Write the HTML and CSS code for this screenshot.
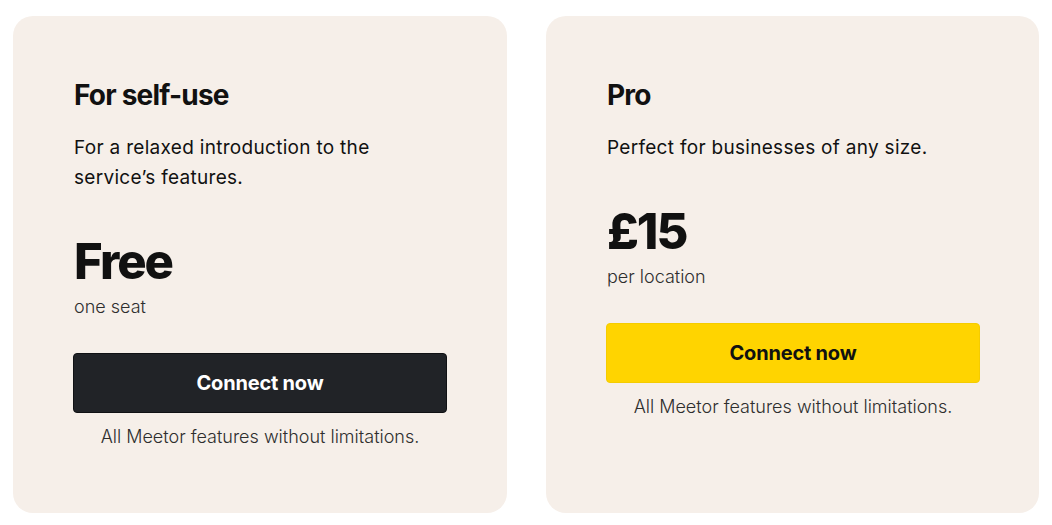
FILE: index.html
```html
<!DOCTYPE html>
<html lang="en">
<head>
<meta charset="utf-8">
<title>Pricing</title>
<link rel="stylesheet" href="styles.css">
</head>
<body>
<main class="plans">
  <section class="card">
    <h2 class="title">For self-use</h2>
    <p class="desc">For a relaxed introduction to the service’s features.</p>
    <div class="price">Free</div>
    <div class="unit">one seat</div>
    <button class="btn btn-dark">Connect now</button>
    <p class="note">All Meetor features without limitations.</p>
  </section>
  <section class="card">
    <h2 class="title">Pro</h2>
    <p class="desc">Perfect for businesses of any size.</p>
    <div class="price">£15</div>
    <div class="unit">per location</div>
    <button class="btn btn-yellow">Connect now</button>
    <p class="note">All Meetor features without limitations.</p>
  </section>
</main>
</body>
</html>
```

FILE: styles.css
```css
* { box-sizing: border-box; }
html, body { margin: 0; background: #ffffff; }
body {
  font-family: Inter, "Liberation Sans", sans-serif;
  color: #111111;
  padding: 16px 13px 12px 13px;
}
.plans {
  display: grid;
  grid-template-columns: 494px 493px;
  column-gap: 39px;
  height: 497px;
}
.card {
  background: #f6efe9;
  border-radius: 20px;
  padding: 62px 60px 0 61px;
  display: flex;
  flex-direction: column;
}
.title {
  margin: 0;
  font-size: 28px;
  line-height: 34px;
  font-weight: 700;
  letter-spacing: -0.8px;
}
.desc {
  margin: 21px 0 0;
  font-size: 19px;
  line-height: 30px;
  font-weight: 400;
  letter-spacing: 0.3px;
  max-width: 330px;
}
.price {
  margin-top: 44px;
  font-size: 49px;
  line-height: 50px;
  font-weight: 800;
  letter-spacing: -2px;
}
.unit {
  margin-top: 8px;
  font-size: 18px;
  line-height: 24px;
  font-weight: 300;
  color: #2e2e2e;
}
.btn {
  margin: 34px 0 0 -1px;
  height: 60px;
  width: 374px;
  border-radius: 4px;
  font-family: inherit;
  font-size: 20px;
  font-weight: 700;
  letter-spacing: -0.2px;
  cursor: pointer;
}
.btn-dark {
  background: #212327;
  color: #ffffff;
  border: 1px solid #101114;
}
.btn-yellow {
  background: #ffd400;
  color: #111111;
  border: 1px solid #f5cc00;
}
.note {
  margin: 12px 0 0 -1px;
  width: 374px;
  text-align: center;
  font-size: 18px;
  line-height: 24px;
  font-weight: 300;
  color: #2e2e2e;
}
```
